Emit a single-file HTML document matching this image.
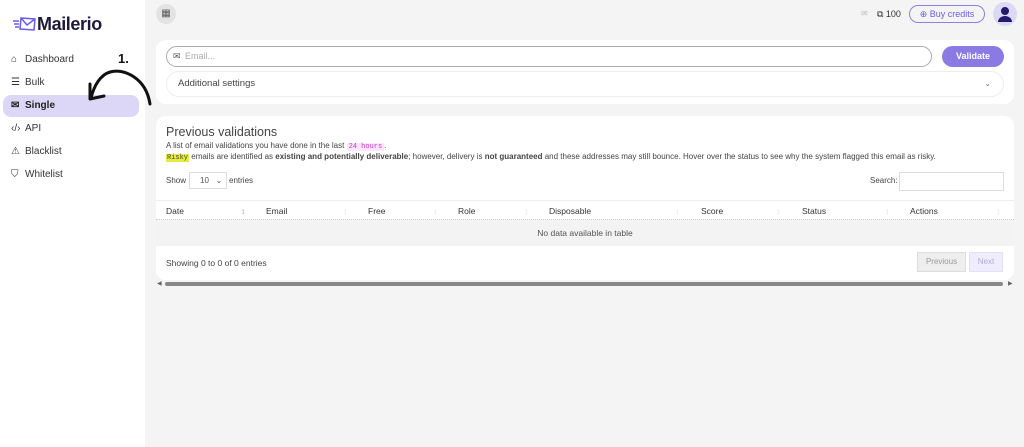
<!DOCTYPE html><html><head><style>
*{box-sizing:border-box;margin:0;padding:0}
body{width:1024px;height:447px;background:#f4f4f4;font-family:"Liberation Sans",sans-serif;color:#333;position:relative;overflow:hidden;font-size:9px}
.sb{position:absolute;left:0;top:0;width:145px;height:447px;background:#fff}
.logo{position:absolute;left:12px;top:14px;font-size:18px;font-weight:bold;color:#1d1a3a;letter-spacing:-.4px}
.nav{position:absolute;left:3px;width:136px;height:22px;font-size:10px;color:#333;padding-left:8px;line-height:22px;top:0}
.nav span{display:inline-block;width:14px}
.act{background:#dcd7f7;border-radius:8px;font-weight:bold;color:#222}
.card{position:absolute;background:#fff;border-radius:10px}
.abs{position:absolute}
</style></head><body>
<div class="sb">
<div class="logo"><svg width="25" height="17" viewBox="0 0 25 17" style="vertical-align:-2px"><g stroke="#6c5ce7" stroke-width="1.5" fill="none"><path d="M9 3l14 1-1 11-14-1z M9 3l6 7 8-6"/><path d="M1 6h6M2 9h5M3 12h4"/></g></svg>Mailerio</div>
<div class="nav" style="top:49px"><span>⌂</span>Dashboard</div>
<div class="nav" style="top:72px"><span>☰</span>Bulk</div>
<div class="nav act" style="top:95px"><span>✉</span>Single</div>
<div class="nav" style="top:118px"><span>‹/›</span>API</div>
<div class="nav" style="top:141px"><span>⚠</span>Blacklist</div>
<div class="nav" style="top:164px"><span>⛉</span>Whitelist</div>
</div>
<div class="abs" style="left:118px;top:51px;font-size:13px;font-weight:bold;color:#111">1.</div>
<svg class="abs" style="left:80px;top:64px" width="74" height="44" viewBox="0 0 74 44"><path d="M70 40C66 14 44 4 30 8 20 11 14 22 11 34" stroke="#111" stroke-width="3" fill="none" stroke-linecap="round"/><path d="M10 20 10 35 24 32" stroke="#111" stroke-width="3" fill="none" stroke-linecap="round" stroke-linejoin="round"/></svg>
<div class="abs" style="left:156px;top:4px;width:20px;height:20px;border-radius:50%;background:#e3e3e3;text-align:center;line-height:20px;font-size:10px;color:#555">▦</div>
<div class="abs" style="left:861px;top:9px;font-size:8px;color:#bbb">✉</div>
<div class="abs" style="left:877px;top:9px;font-size:9px;color:#333">⧉ 100</div>
<div class="abs" style="left:909px;top:5px;width:76px;height:18px;border:1px solid #8d80e0;border-radius:10px;color:#6c5ce7;font-size:9px;text-align:center;line-height:16px">⊕ Buy credits</div>
<div class="abs" style="left:993px;top:2px;width:24px;height:24px;border-radius:50%;background:#ddd8f6"><svg width="24" height="24"><circle cx="12" cy="9" r="4" fill="#231a6b"/><path d="M5 20a7 6 0 0 1 14 0z" fill="#231a6b"/></svg></div>
<div class="card" style="left:156px;top:40px;width:858px;height:64px">
<div class="abs" style="left:10px;top:6px;width:766px;height:21px;border:1px solid #aaa;border-radius:11px;padding-left:18px;line-height:19px;color:#aaa;font-size:9px">Email...<span class="abs" style="left:6px;top:0;color:#555">✉</span></div>
<div class="abs" style="left:786px;top:6px;width:62px;height:21px;border-radius:11px;background:#8b7ae4;color:#fff;font-weight:bold;font-size:9px;text-align:center;line-height:21px">Validate</div>
<div class="abs" style="left:10px;top:31px;width:838px;height:26px;border:1px solid #eee;border-radius:13px;padding-left:11px;line-height:24px;font-size:9.5px;color:#444">Additional settings<span class="abs" style="right:12px;top:0;font-size:8px;color:#777">⌄</span></div>
</div>
<div class="card" style="left:156px;top:116px;width:858px;height:164px;overflow:hidden">
<div class="abs" style="left:10px;top:9px;font-size:12.5px;color:#444">Previous validations</div>
<div class="abs" style="left:10px;top:25px;font-size:8px;color:#444">A list of email validations you have done in the last <span style="background:#fbe6fb;color:#c03cc0;font-family:'Liberation Mono';font-size:7px;padding:0 2px">24 hours</span>.</div>
<div class="abs" style="left:10px;top:36px;font-size:8px;color:#444;white-space:nowrap"><span style="background:#e6ec3a;font-family:'Liberation Mono';font-size:7px;padding:0 1px">Risky</span> emails are identified as <b>existing and potentially deliverable</b>; however, delivery is <b>not guaranteed</b> and these addresses may still bounce. Hover over the status to see why the system flagged this email as risky.</div>
<div class="abs" style="left:10px;top:60px;font-size:8px;color:#444">Show</div>
<div class="abs" style="left:33px;top:56px;width:38px;height:17px;border:1px solid #ddd;font-size:8px;padding:3px 0 0 10px;color:#555">10 &nbsp;&nbsp;⌄</div>
<div class="abs" style="left:73px;top:60px;font-size:8px;color:#444">entries</div>
<div class="abs" style="left:714px;top:60px;font-size:8px;color:#444">Search:</div>
<div class="abs" style="left:743px;top:56px;width:105px;height:19px;border:1px solid #ddd"></div>
<div class="abs" style="left:0;top:84px;width:858px;height:20px;border-top:1px solid #eee;border-bottom:1px dotted #ccc;font-size:8.5px;color:#333">
<span class="abs" style="left:10px;top:5px">Date</span><span class="abs" style="left:110px;top:5px">Email</span><span class="abs" style="left:212px;top:5px">Free</span><span class="abs" style="left:302px;top:5px">Role</span><span class="abs" style="left:393px;top:5px">Disposable</span><span class="abs" style="left:545px;top:5px">Score</span><span class="abs" style="left:646px;top:5px">Status</span><span class="abs" style="left:754px;top:5px">Actions</span>
<span class="abs" style="left:85px;top:5px;color:#999">↕</span><span class="abs" style="left:187px;top:5px;color:#ddd">↕</span><span class="abs" style="left:277px;top:5px;color:#ddd">↕</span><span class="abs" style="left:368px;top:5px;color:#ddd">↕</span><span class="abs" style="left:519px;top:5px;color:#ddd">↕</span><span class="abs" style="left:620px;top:5px;color:#ddd">↕</span><span class="abs" style="left:729px;top:5px;color:#ddd">↕</span><span class="abs" style="left:840px;top:5px;color:#ddd">↕</span></div>
<div class="abs" style="left:0;top:104px;width:858px;height:26px;background:#f3f3f3;text-align:center;line-height:26px;font-size:8.5px;color:#555">No data available in table</div>
<div class="abs" style="left:10px;top:142px;font-size:8.5px;color:#444">Showing 0 to 0 of 0 entries</div>
<div class="abs" style="left:761px;top:136px;width:49px;height:20px;background:#eee;border:1px solid #ddd;font-size:8px;color:#999;text-align:center;line-height:18px">Previous</div>
<div class="abs" style="left:813px;top:136px;width:34px;height:20px;background:#efedfb;border:1px solid #e4e0f8;font-size:8px;color:#b0a8e0;text-align:center;line-height:18px">Next</div>
</div>
<div class="abs" style="left:165px;top:282px;width:838px;height:4px;border-radius:2px;background:#888"></div>
<div class="abs" style="left:157px;top:280px;font-size:6px;color:#666">◀</div>
<div class="abs" style="left:1008px;top:280px;font-size:6px;color:#666">▶</div>
</body></html>
